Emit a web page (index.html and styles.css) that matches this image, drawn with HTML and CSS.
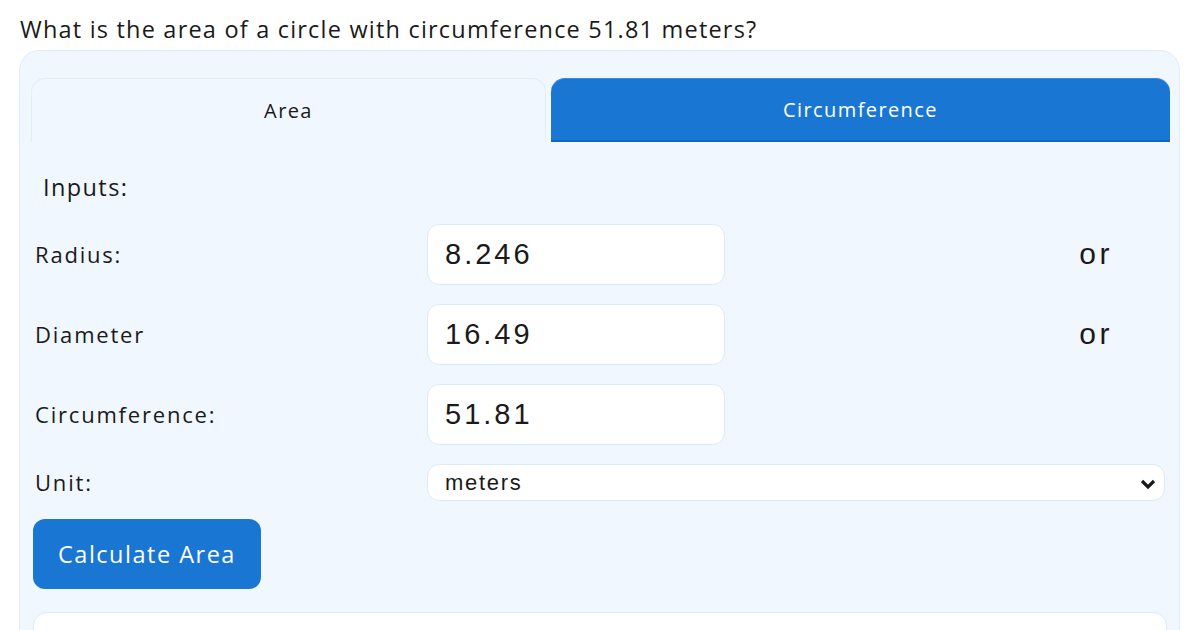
FILE: index.html
```html
<!DOCTYPE html>
<html lang="en">
<head>
    <meta charset="UTF-8">
    <meta name="viewport" content="width=device-width, initial-scale=1.0">
    <link rel="stylesheet" href="styles.css">
    <title>Circle Area Calculator</title>
</head>
<body>
<div class="pagina">

    <h1 class="pregunta">What is the area of a circle with circumference 51.81 meters?</h1>

    <div class="calculadora">
        <!-- Pestañas -->
        <div class="pestanas">
            <button type="button" class="pestana">Area</button>
            <button type="button" class="pestana activa">Circumference</button>
        </div>

        <div class="contenido">
            <h2 class="tituloInputs">Inputs:</h2>

            <form class="formulario" onsubmit="return false">
                <label class="etiqueta" for="radio">Radius:</label>
                <input type="text" id="radio" class="campo" value="8.246">
                <span class="separador">or</span>

                <label class="etiqueta" for="diametro">Diameter</label>
                <input type="text" id="diametro" class="campo" value="16.49">
                <span class="separador">or</span>

                <label class="etiqueta" for="circunferencia">Circumference:</label>
                <input type="text" id="circunferencia" class="campo" value="51.81">
                <span></span>

                <label class="etiqueta" for="unidad">Unit:</label>
                <div class="selectorUnidad">
                    <select id="unidad" class="unidad">
                        <option>meters</option>
                        <option>feet</option>
                        <option>inches</option>
                    </select>
                    <svg class="flecha" width="16" height="12" viewBox="0 0 16 12">
                        <path d="M2 3 L8 9 L14 3" fill="none" stroke="#1a1a1a" stroke-width="3.2"/>
                    </svg>
                </div>
            </form>

            <button type="button" class="calcular">Calculate Area</button>

            <div class="resultado"></div>
        </div>
    </div>

</div>
</body>
</html>
```

FILE: styles.css
```css
body {
    margin: 0;
    font-family: "Open Sans", "Noto Sans", sans-serif;
    color: #1a1a1a;
    background-color: #ffffff;
}

.pagina {
    box-sizing: border-box;
    height: 100vh;
    overflow: hidden;
    padding: 14px 20px 0 19px;
}

.pregunta {
    margin: 0 0 6px 1px;
    font-size: 23.5px;
    font-weight: 400;
    letter-spacing: 1.2px;
    line-height: 30px;
}

.calculadora {
    background-color: #f0f7fe;
    border: 1px solid #deeefc;
    border-radius: 20px;
    padding: 27px 9px 20px 11px;
}

.pestanas {
    display: flex;
    gap: 5px;
}

.pestana {
    flex: 1 1 auto;
    height: 64px;
    font-family: "Open Sans", sans-serif;
    font-size: 20px;
    letter-spacing: 1.4px;
    color: #1a1a1a;
    background-color: #f0f7fe;
    border: 1px solid #e0eefb;
    border-bottom: none;
    border-radius: 14px 14px 0 0;
    cursor: pointer;
}

.pestana.activa {
    background-color: #1976d2;
    color: #ffffff;
    border: none;
    border-top: 1px solid #3a89d8;
    border-bottom: 2px solid #1565c0;
}

.contenido {
    padding: 0 3px 0 2px;
}

.tituloInputs {
    margin: 30px 0 22px 10px;
    font-size: 23.5px;
    font-weight: 400;
    letter-spacing: 1.4px;
    line-height: 30px;
}

.formulario {
    display: grid;
    grid-template-columns: 394px 298px 1fr;
    grid-template-rows: 60px 60px 60px 36px;
    row-gap: 20px;
    align-items: center;
}

.etiqueta {
    font-size: 22px;
    letter-spacing: 1.8px;
    padding-left: 2px;
}

.campo {
    box-sizing: border-box;
    height: 61px;
    width: 298px;
    padding: 0 17px;
    font-family: "Liberation Sans", Arial, sans-serif;
    font-size: 29px;
    letter-spacing: 3px;
    color: #1a1a1a;
    background-color: #ffffff;
    border: 1px solid #dbebfa;
    border-radius: 12px;
    outline: none;
}

.separador {
    justify-self: end;
    margin-right: 54px;
    font-family: "Liberation Sans", Arial, sans-serif;
    font-size: 30px;
    letter-spacing: 3.5px;
}

.selectorUnidad {
    grid-column: 2 / 4;
    position: relative;
    margin-right: 2px;
}

.unidad {
    appearance: none;
    box-sizing: border-box;
    width: 100%;
    height: 37px;
    padding: 0 17px;
    font-family: "Liberation Sans", Arial, sans-serif;
    font-size: 22px;
    letter-spacing: 1.7px;
    color: #1a1a1a;
    background-color: #ffffff;
    border: 1px solid #dbebfa;
    border-radius: 12px;
    outline: none;
}

.flecha {
    position: absolute;
    right: 9px;
    top: 14px;
}

.calcular {
    display: block;
    margin-top: 19px;
    width: 228px;
    height: 70px;
    font-family: "Open Sans", sans-serif;
    font-size: 23.5px;
    letter-spacing: 1.5px;
    color: #ffffff;
    background-color: #1976d2;
    border: none;
    border-radius: 12px;
    cursor: pointer;
}

.resultado {
    margin-top: 23px;
    height: 40px;
    background-color: #ffffff;
    border: 1px solid #dcecfb;
    border-radius: 14px;
}
```
